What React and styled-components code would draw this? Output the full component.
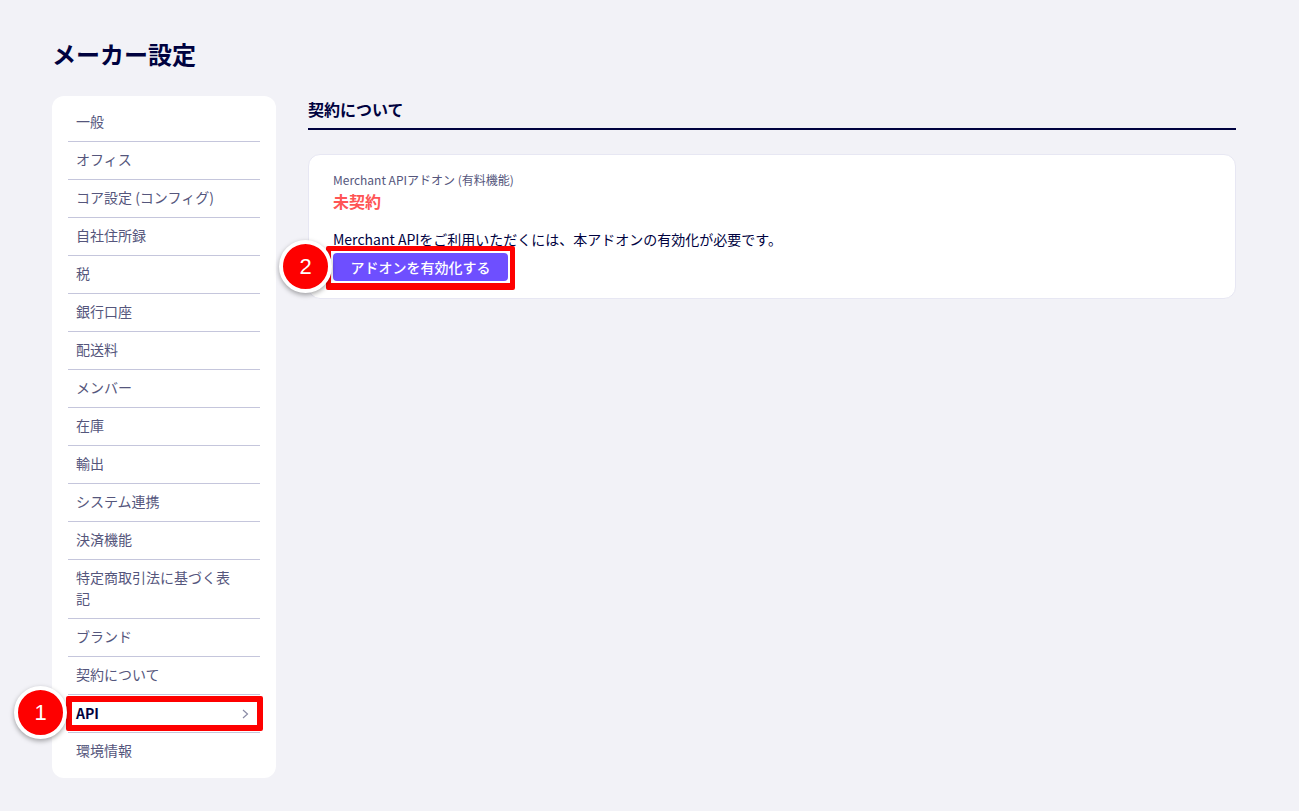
import styled, { createGlobalStyle } from 'styled-components';

const GlobalStyle = createGlobalStyle`
  * {
    box-sizing: border-box;
  }

  body {
    background-color: #f2f2f7;
    color: #00023f;
    font-family: 'Noto Sans CJK JP', 'Noto Sans', sans-serif;
    margin: 0;
  }
`;

const Page = styled.div`
  min-height: 811px;
  padding: 37px 63px 33px 52px;
`;

const PageTitle = styled.h1`
  font-size: 24px;
  font-weight: 700;
  height: 34px;
  line-height: 34px;
  margin: 0 0 25px;
`;

const Columns = styled.div`
  align-items: flex-start;
  column-gap: 32px;
  display: grid;
  grid-template-columns: 224px 1fr;
`;

const Sidebar = styled.ul`
  background-color: #fff;
  border-radius: 12px;
  list-style: none;
  margin: 0;
  padding: 8px 16px 7px;
`;

const MenuItem = styled.li`
  align-items: center;
  border-bottom: ${({ $last }) => ($last ? '0' : '1px solid #c5c6dc')};
  color: ${({ $active }) => ($active ? '#00023f' : '#55567c')};
  display: flex;
  font-size: 14px;
  font-weight: ${({ $active }) => ($active ? 700 : 400)};
  justify-content: space-between;
  line-height: 21px;
  min-height: 38px;
  padding: ${({ $active, $last }) =>
    $active ? '8px 11px 8px 8px' : $last ? '7px 11px 10px 8px' : '7px 11px 9px 8px'};
  position: relative;
`;

const MenuText = styled.span`
  max-width: 160px;
`;

const Highlight = styled.span`
  border-color: #fe0000;
  border-radius: 2px;
  border-style: solid;
  border-width: ${({ $border }) => $border};
  bottom: ${({ $bottom }) => $bottom}px;
  left: ${({ $left }) => $left}px;
  pointer-events: none;
  position: absolute;
  right: ${({ $right }) => $right}px;
  top: ${({ $top }) => $top}px;
`;

const Badge = styled.span`
  align-items: center;
  background-color: #fe0000;
  border: 4px solid #fff;
  border-radius: 50%;
  box-shadow: 0 2px 5px rgba(0, 0, 0, 0.35);
  color: #fff;
  display: flex;
  font-family: 'Liberation Sans', sans-serif;
  font-size: 22px;
  font-weight: 400;
  height: 53px;
  justify-content: center;
  left: ${({ $left }) => $left}px;
  position: absolute;
  top: ${({ $top }) => $top}px;
  width: 53px;
`;

const Main = styled.section`
  min-width: 0;
`;

const SectionHeading = styled.h2`
  border-bottom: 2px solid #00023f;
  font-size: 16px;
  font-weight: 700;
  height: 34px;
  line-height: 26px;
  margin: 0 0 24px;
`;

const Card = styled.div`
  background-color: #fff;
  border: 1px solid #e7e7f3;
  border-radius: 12px;
  min-height: 145px;
  padding: 16px 24px;
`;

const Label = styled.div`
  color: #55567c;
  font-size: 12px;
  line-height: 18px;
`;

const Status = styled.div`
  color: #ff5555;
  font-size: 16px;
  font-weight: 700;
  line-height: 24px;
  margin-bottom: 16px;
`;

const Description = styled.p`
  font-size: 14px;
  line-height: 21px;
  margin: 0 0 3px;
`;

const ButtonWrap = styled.div`
  display: inline-flex;
  position: relative;
`;

const PrimaryButton = styled.button`
  background-color: #6e4fff;
  border: 0;
  border-radius: 4px;
  color: #fff;
  font-family: inherit;
  font-size: 14px;
  font-weight: 500;
  height: 28px;
  padding: 0;
  width: 175px;
`;

const menu = [
  '一般',
  'オフィス',
  'コア設定 (コンフィグ)',
  '自社住所録',
  '税',
  '銀行口座',
  '配送料',
  'メンバー',
  '在庫',
  '輸出',
  'システム連携',
  '決済機能',
  '特定商取引法に基づく表記',
  'ブランド',
  '契約について',
  'API',
  '環境情報',
];

const Chevron = () => (
  <svg width="7" height="10" viewBox="0 0 7 10" fill="none">
    <path d="M1 1l4.5 4L1 9" stroke="#8a8ba6" strokeWidth="1.2" />
  </svg>
);

const App = () => (
  <>
    <GlobalStyle />
    <Page>
      <PageTitle>メーカー設定</PageTitle>
      <Columns>
        <Sidebar>
          {menu.map((name, i) => (
            <MenuItem
              key={name}
              $active={name === 'API'}
              $last={i === menu.length - 1}
            >
              <MenuText>{name}</MenuText>
              {name === 'API' && (
                <>
                  <Chevron />
                  <Highlight
                    $border="6px"
                    $top={1}
                    $bottom={1}
                    $left={-2}
                    $right={-3}
                  />
                  <Badge $left={-54} $top={-9}>
                    1
                  </Badge>
                </>
              )}
            </MenuItem>
          ))}
        </Sidebar>
        <Main>
          <SectionHeading>契約について</SectionHeading>
          <Card>
            <Label>Merchant APIアドオン (有料機能)</Label>
            <Status>未契約</Status>
            <Description>
              Merchant APIをご利用いただくには、本アドオンの有効化が必要です。
            </Description>
            <ButtonWrap>
              <PrimaryButton>アドオンを有効化する</PrimaryButton>
              <Highlight
                $border="5px 5px 7px"
                $top={-7}
                $bottom={-9}
                $left={-7}
                $right={-7}
              />
              <Badge $left={-54} $top={-13}>
                2
              </Badge>
            </ButtonWrap>
          </Card>
        </Main>
      </Columns>
    </Page>
  </>
);

export default App;
